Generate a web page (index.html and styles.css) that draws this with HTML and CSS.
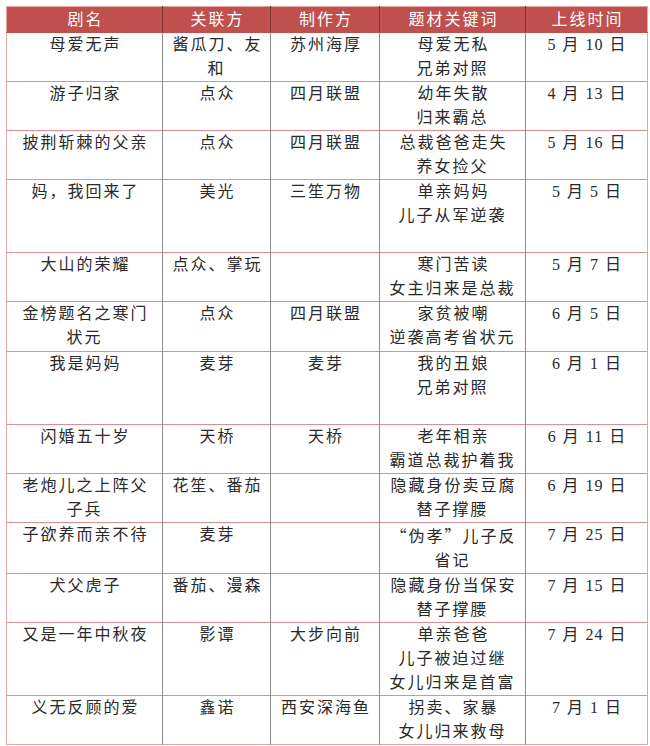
FILE: index.html
```html
<!DOCTYPE html>
<html lang="zh-CN">
<head>
<meta charset="utf-8">
<title>短剧上线表</title>
<link rel="stylesheet" href="styles.css">
</head>
<body>
<div class="wrap">
<table class="drama">
  <colgroup>
    <col class="c1"><col class="c2"><col class="c3"><col class="c4"><col class="c5">
  </colgroup>
  <thead>
    <tr><th>剧名</th><th>关联方</th><th>制作方</th><th>题材关键词</th><th>上线时间</th></tr>
  </thead>
  <tbody>
    <tr><td>母爱无声</td><td>酱瓜刀、友<br>和</td><td>苏州海厚</td><td>母爱无私<br>兄弟对照</td><td>5 月 10 日</td></tr>
    <tr><td>游子归家</td><td>点众</td><td>四月联盟</td><td>幼年失散<br>归来霸总</td><td>4 月 13 日</td></tr>
    <tr><td>披荆斩棘的父亲</td><td>点众</td><td>四月联盟</td><td>总裁爸爸走失<br>养女捡父</td><td>5 月 16 日</td></tr>
    <tr class="tall"><td>妈，我回来了</td><td>美光</td><td>三笙万物</td><td>单亲妈妈<br>儿子从军逆袭</td><td>5 月 5 日</td></tr>
    <tr><td>大山的荣耀</td><td>点众、掌玩</td><td></td><td>寒门苦读<br>女主归来是总裁</td><td>5 月 7 日</td></tr>
    <tr><td>金榜题名之寒门<br>状元</td><td>点众</td><td>四月联盟</td><td>家贫被嘲<br>逆袭高考省状元</td><td>6 月 5 日</td></tr>
    <tr class="tall"><td>我是妈妈</td><td>麦芽</td><td>麦芽</td><td>我的丑娘<br>兄弟对照</td><td>6 月 1 日</td></tr>
    <tr><td>闪婚五十岁</td><td>天桥</td><td>天桥</td><td>老年相亲<br>霸道总裁护着我</td><td>6 月 11 日</td></tr>
    <tr><td>老炮儿之上阵父<br>子兵</td><td>花笙、番茄</td><td></td><td>隐藏身份卖豆腐<br>替子撑腰</td><td>6 月 19 日</td></tr>
    <tr><td>子欲养而亲不待</td><td>麦芽</td><td></td><td><span class="cjk">“伪孝”</span>儿子反<br>省记</td><td>7 月 25 日</td></tr>
    <tr><td>犬父虎子</td><td>番茄、漫森</td><td></td><td>隐藏身份当保安<br>替子撑腰</td><td>7 月 15 日</td></tr>
    <tr class="tall"><td>又是一年中秋夜</td><td>影谭</td><td>大步向前</td><td>单亲爸爸<br>儿子被迫过继<br>女儿归来是首富</td><td>7 月 24 日</td></tr>
    <tr><td>义无反顾的爱</td><td>鑫诺</td><td>西安深海鱼</td><td>拐卖、家暴<br>女儿归来救母</td><td>7 月 1 日</td></tr>
  </tbody>
</table>
</div>
</body>
</html>
```
FILE: styles.css
```css
html, body {
  margin: 0;
  padding: 0;
  background: #ffffff;
}

.wrap {
  padding: 6px 0 0 6px;
}

.drama {
  border-collapse: collapse;
  table-layout: fixed;
  width: 641px;
  font-family: "Liberation Serif", "Noto Sans CJK SC", serif;
  font-size: 16px;
  line-height: 24px;
  color: #2a2a2a;
  border: 1px solid #e3a5a5;
}

.c1 { width: 156px; }
.c2 { width: 108px; }
.c3 { width: 109px; }
.c4 { width: 146px; }
.c5 { width: 122px; }

.drama th {
  background: #c0504d;
  color: #ffffff;
  font-weight: normal;
  height: 25px;
  padding: 0;
  letter-spacing: 2px;
  text-indent: 2px;
  text-align: center;
  vertical-align: middle;
  border-left: 1px solid #7b3634;
  border-bottom: 1px solid #c0504d;
}

.drama th:first-child {
  border-left: 1px solid #e3a5a5;
}

.drama td {
  padding: 0 6px;
  height: 48.1px;
  text-align: center;
  vertical-align: top;
  letter-spacing: 2px;
  text-indent: 2px;
  border-top: 1px solid #dc9090;
  border-left: 1px solid #8c8c8c;
}

.drama td:first-child {
  border-left: 1px solid #e3a5a5;
}

.drama td:last-child {
  border-right: 1px solid #e3a5a5;
  letter-spacing: 1px;
  word-spacing: 1px;
  text-indent: 1px;
}

.drama tr.tall td {
  height: 72.1px;
}

.cjk {
  font-family: "Noto Sans CJK SC", sans-serif;
}
```
